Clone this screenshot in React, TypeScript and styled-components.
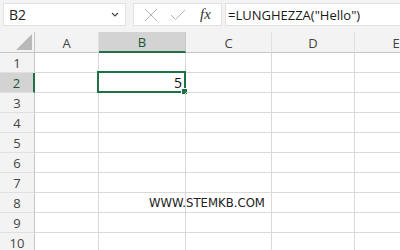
import React from 'react';
import styled, {createGlobalStyle, css} from 'styled-components';

const green = '#1e7145';
const grid = '#d9d9d9';

const columns = ['A', 'B', 'C', 'D', 'E'];
const rows = [1, 2, 3, 4, 5, 6, 7, 8, 9, 10];
const selCol = 'B';
const selRow = 2;

const App: React.FC<{}> = () => {
    return (
        <Page>
            <GlobalStyle />
            <Toolbar>
                <NameBox>
                    <span>B2</span>
                    <svg width="8" height="5" viewBox="0 0 8 5">
                        <path d="M1 1 L4 4 L7 1" fill="none" stroke="#444" strokeWidth="1.1" />
                    </svg>
                </NameBox>
                <ActionBox>
                    <svg width="14" height="14" viewBox="0 0 14 14">
                        <path d="M1 1 L13 13 M13 1 L1 13" stroke="#b4b4b4" strokeWidth="1" />
                    </svg>
                    <svg width="16" height="12" viewBox="0 0 16 12">
                        <path d="M1 6 L5.5 10.5 L15 1" fill="none" stroke="#b4b4b4" strokeWidth="1" />
                    </svg>
                    <Fx>fx</Fx>
                </ActionBox>
                <FormulaBox>=LUNGHEZZA("Hello")</FormulaBox>
            </Toolbar>
            <Sheet>
                <Corner>
                    <svg width="17" height="16" viewBox="0 0 17 16">
                        <path d="M16 0 L16 16 L0 16 Z" fill="#b9b9b9" />
                    </svg>
                </Corner>
                {columns.map(c => (
                    <ColHead key={c} $active={c === selCol}>{c}</ColHead>
                ))}
                {rows.map(r => (
                    <React.Fragment key={r}>
                        <RowHead $active={r === selRow}>{r}</RowHead>
                        {columns.map(c => {
                            const selected = r === selRow && c === selCol;
                            return (
                                <Cell key={c}>
                                    {selected && <>5<Selection><Handle /></Selection></>}
                                    {r === 8 && c === 'B' && <Label>WWW.STEMKB.COM</Label>}
                                </Cell>
                            );
                        })}
                    </React.Fragment>
                ))}
            </Sheet>
        </Page>
    );
};

const GlobalStyle = createGlobalStyle`
    html, body {
        margin: 0;
        padding: 0;
        background: #fff;
        overflow: hidden;
    }
    body {
        font-family: "Open Sans", "Noto Sans", sans-serif;
    }
`;

const Page = styled.div`
    width: 400px;
    height: 250px;
    overflow: hidden;
    background: #fff;
`;

const Toolbar = styled.div`
    height: 32px;
    background: #f3f3f3;
    display: flex;
    align-items: flex-start;
    padding: 3px 0 0 3px;
    box-sizing: border-box;
`;

const boxStyle = css`
    height: 23px;
    box-sizing: border-box;
    background: #fff;
    border: 1px solid #e1e1e1;
    display: flex;
    align-items: center;
`;

const NameBox = styled.div`
    ${boxStyle};
    width: 123px;
    padding: 0 6px 0 5px;
    justify-content: space-between;
    font-size: 14px;
    color: #222;
`;

const ActionBox = styled.div`
    ${boxStyle};
    width: 89px;
    margin-left: 7px;
    padding-left: 10px;
    gap: 12px;
`;

const Fx = styled.span`
    font-family: "Liberation Serif", serif;
    font-style: italic;
    font-size: 15px;
    color: #333;
    margin-left: 2px;
`;

const FormulaBox = styled.div`
    ${boxStyle};
    flex: 1;
    margin-left: 3px;
    padding-left: 2px;
    border-right: none;
    font-size: 13px;
    color: #1a1a1a;
`;

const Sheet = styled.div`
    display: grid;
    grid-template-columns: 35px 64px 87px 86px 83px 83px;
    grid-template-rows: 21px repeat(10, 20px);
    font-size: 13px;
`;

const Corner = styled.div`
    background: #f3f3f3;
    border-right: 1px solid #c6c6c6;
    border-bottom: 1px solid #c6c6c6;
    box-sizing: border-box;
    display: flex;
    align-items: flex-end;
    justify-content: flex-end;
    padding: 0 1px 2px 0;
`;

const ColHead = styled.div<{$active: boolean}>`
    box-sizing: border-box;
    background: ${p => (p.$active ? '#d3d3d3' : '#f3f3f3')};
    border-right: 1px solid ${p => (p.$active ? '#c6c6c6' : '#e0e0e0')};
    border-bottom: ${p => (p.$active ? `2px solid ${green}` : '1px solid #c6c6c6')};
    color: ${p => (p.$active ? '#155a34' : '#444')};
    display: flex;
    align-items: center;
    justify-content: center;
    padding-top: 1px;
    font-size: 13px;
`;

const RowHead = styled.div<{$active: boolean}>`
    box-sizing: border-box;
    background: ${p => (p.$active ? '#d3d3d3' : '#f3f3f3')};
    border-right: ${p => (p.$active ? `2px solid ${green}` : '1px solid #c6c6c6')};
    border-bottom: 1px solid #e0e0e0;
    color: ${p => (p.$active ? '#155a34' : '#444')};
    display: flex;
    align-items: center;
    justify-content: center;
    font-size: 13px;
`;

const Cell = styled.div`
    position: relative;
    box-sizing: border-box;
    border-right: 1px solid ${grid};
    border-bottom: 1px solid ${grid};
    display: flex;
    align-items: center;
    justify-content: flex-end;
    padding-right: 3px;
    font-size: 14px;
    color: #111;
`;

const Selection = styled.div`
    position: absolute;
    top: -2px;
    left: -2px;
    right: -1px;
    bottom: -1px;
    border: 2px solid ${green};
    pointer-events: none;
`;

const Handle = styled.div`
    position: absolute;
    right: -4px;
    bottom: -4px;
    width: 5px;
    height: 5px;
    background: ${green};
    border: 1px solid #fff;
`;

const Label = styled.span`
    position: absolute;
    left: 50px;
    top: 0;
    bottom: 0;
    display: flex;
    align-items: center;
    white-space: nowrap;
    font-family: "DejaVu Sans", Verdana, sans-serif;
    font-size: 11.7px;
    color: #222;
    z-index: 1;
`;

export default App;
